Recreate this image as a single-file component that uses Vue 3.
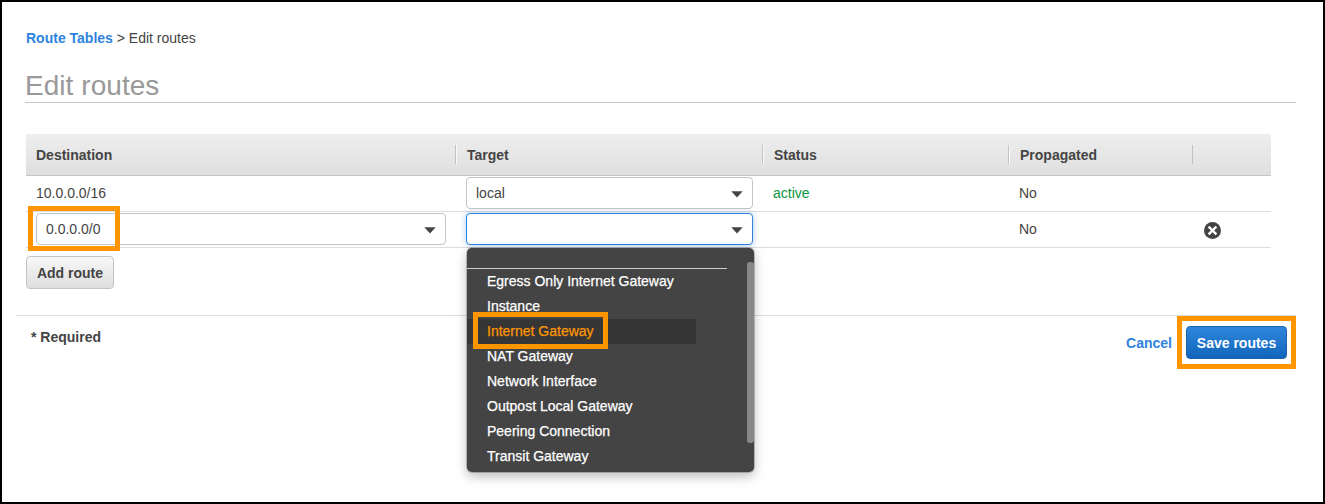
<script setup>
const columns = ['Destination', 'Target', 'Status', 'Propagated', '']
const targets = [
  'Egress Only Internet Gateway',
  'Instance',
  'Internet Gateway',
  'NAT Gateway',
  'Network Interface',
  'Outpost Local Gateway',
  'Peering Connection',
  'Transit Gateway',
]
const selected = 'Internet Gateway'
</script>

<template>
  <main class="page">
    <nav class="crumbs"><a class="link">Route Tables</a> &gt; Edit routes</nav>
    <h1 class="title">Edit routes</h1>

    <section class="table">
      <div class="row head">
        <div v-for="(c, i) in columns" :key="i" class="th"><span>{{ c }}</span></div>
      </div>
      <div class="row">
        <div class="td">10.0.0.0/16</div>
        <div class="td">
          <div class="select">
            <span>local</span>
            <svg class="caret" width="12" height="7" viewBox="0 0 12 7"><path d="M0.3 0.3h11.4L6 6.6z" fill="#444" /></svg>
          </div>
        </div>
        <div class="td active">active</div>
        <div class="td">No</div>
        <div class="td"></div>
      </div>
      <div class="row">
        <div class="td">
          <div class="select">
            <span>0.0.0.0/0</span>
            <svg class="caret" width="12" height="7" viewBox="0 0 12 7"><path d="M0.3 0.3h11.4L6 6.6z" fill="#444" /></svg>
            <i class="mark mark-destination"></i>
          </div>
        </div>
        <div class="td">
          <div class="select focused">
            <span></span>
            <svg class="caret" width="12" height="7" viewBox="0 0 12 7"><path d="M0.3 0.3h11.4L6 6.6z" fill="#444" /></svg>
            <div class="menu">
              <div class="menu-top"></div>
              <div v-for="t in targets" :key="t" class="option" :class="{ chosen: t === selected }">
                {{ t }}<i v-if="t === selected" class="mark mark-option"></i>
              </div>
              <div class="scrollbar"></div>
            </div>
          </div>
        </div>
        <div class="td"></div>
        <div class="td">No</div>
        <div class="td remove">
          <svg width="17" height="17" viewBox="0 0 17 17">
            <circle cx="8.5" cy="8.5" r="8.5" fill="#444" />
            <path d="M4.6 4.6l7.8 7.8M12.4 4.6l-7.8 7.8" stroke="#fff" stroke-width="2.3" />
          </svg>
        </div>
      </div>
    </section>

    <button class="btn add">Add route</button>

    <footer class="footer">
      <span class="required">* Required</span>
      <div class="actions">
        <a class="link">Cancel</a>
        <button class="btn save">Save routes<i class="mark mark-save"></i></button>
      </div>
    </footer>
  </main>
</template>

<style>
body { margin: 0; background: #fff; }
</style>

<style scoped>
.page {
  box-sizing: border-box;
  width: 1325px;
  height: 504px;
  border: 2px solid #000;
  background: #fff;
  overflow: hidden;
  font: 14px/18px "Liberation Sans", Arial, sans-serif;
  color: #444;
}
.link { color: #2e83de; font-weight: bold; }
.crumbs { margin: 27px 0 0 24px; height: 18px; white-space: nowrap; }
.title {
  margin: 22px 27px 0 23px;
  height: 33px;
  border-bottom: 1px solid #c8c8c8;
  font-size: 28px;
  line-height: 34px;
  font-weight: normal;
  letter-spacing: 0.05px;
  color: #999;
}
.table { margin: 31px 0 0 24px; width: 1245px; }
.row {
  display: grid;
  grid-template-columns: 429px 307px 246px 184px 79px;
  box-sizing: border-box;
  height: 36px;
  border-bottom: 1px solid #ddd;
}
.head {
  height: 42px;
  align-items: center;
  background: linear-gradient(#eee, #dfdfdf);
  border-bottom-color: #c4c4c4;
  font-weight: bold;
}
.th {
  box-sizing: border-box;
  height: 19px;
  line-height: 21px;
  padding-left: 11px;
  border-left: 1px solid #c2c2c2;
  box-shadow: inset 1px 0 #fafafa;
}
.th:first-child { border: 0; box-shadow: none; padding-left: 10px; }
.th:last-child { box-shadow: none; }
.td { padding: 1px 0 0 11px; line-height: 33px; }
.td:first-child { padding-left: 10px; }
.active { color: #0a9442; }
.select {
  position: relative;
  display: flex;
  align-items: center;
  justify-content: space-between;
  box-sizing: border-box;
  width: 287px;
  height: 32px;
  padding: 0 9px;
  border: 1px solid #c4c4c4;
  border-radius: 4px;
  background: #fff;
}
.td:first-child .select { width: 410px; }
.focused { border-color: #2e83de; box-shadow: 0 0 6px rgba(46, 131, 222, 0.4); }
.caret { margin-top: 2px; }
.menu {
  position: absolute;
  z-index: 2;
  left: 0;
  top: 34px;
  width: 287px;
  height: 224px;
  border-radius: 5px;
  background: #444;
  box-shadow: 0 0 0 1px rgba(0, 0, 0, 0.2), 0 4px 12px rgba(0, 0, 0, 0.28);
}
.menu-top { width: 260px; height: 20px; border-bottom: 1px solid #ccc; }
.option {
  position: relative;
  box-sizing: border-box;
  width: 229px;
  height: 25px;
  line-height: 25px;
  padding-left: 20px;
  color: #fff;
  white-space: nowrap;
  -webkit-text-stroke: 0.25px currentColor;
}
.chosen { background: #363636; color: #ff9500; }
.scrollbar {
  position: absolute;
  right: 0;
  top: 14px;
  width: 7px;
  height: 181px;
  border-radius: 3px;
  background: #888;
}
.remove { display: flex; align-items: center; padding-top: 2px; padding-left: 12px; }
.btn {
  display: block;
  box-sizing: border-box;
  height: 33px;
  padding: 2px 0 0;
  border: 1px solid #c4c4c4;
  border-radius: 4px;
  background: linear-gradient(#f8f8f8, #dedede);
  font: bold 14px/29px "Liberation Sans", Arial, sans-serif;
  color: #444;
}
.add { margin: 8px 0 0 24px; width: 88px; }
.footer {
  display: flex;
  justify-content: space-between;
  margin: 26px 27px 0 14px;
  border-top: 1px solid #ddd;
}
.required { margin: 12px 0 0 15px; font-weight: bold; }
.actions { display: flex; align-items: center; gap: 14px; margin: 10px 9px 0 0; }
.save {
  position: relative;
  width: 101px;
  border-color: #1a62ab;
  background: linear-gradient(#2f86dc, #1166bb);
  color: #fff;
}
.mark { position: absolute; box-sizing: border-box; border: 5px solid #ff9500; pointer-events: none; }
.mark-destination { left: -9px; top: -8px; width: 92px; height: 45px; }
.mark-option { left: 6px; top: -7px; width: 135px; height: 37px; }
.mark-save { left: -10px; top: -11px; width: 119px; height: 53px; }
</style>
